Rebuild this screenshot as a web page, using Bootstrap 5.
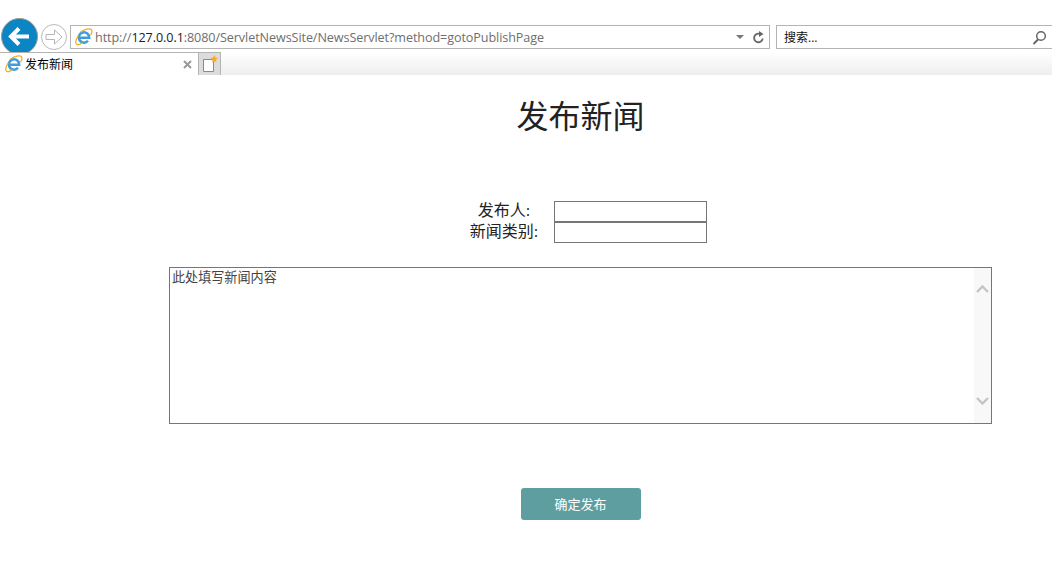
<!DOCTYPE html>
<html lang="zh-CN">
<head>
    <meta charset="UTF-8">
    <meta name="viewport" content="width=device-width, initial-scale=1.0">
    <title>发布新闻</title>
    <link href="https://cdn.jsdelivr.net/npm/bootstrap@5.3.0/dist/css/bootstrap.min.css" rel="stylesheet">
    <style>
        body {
            font-family: "Liberation Serif", "Noto Sans CJK SC", serif;
            color: #000;
            background: #fff;
            overflow: hidden;
        }

        .ie-toolbar {
            height: 52px;
            padding-top: 18px;
            overflow: hidden;
            font-family: "Open Sans", "Noto Sans CJK SC", sans-serif;
        }

        .ie-back {
            width: 37px;
            height: 37px;
            margin-left: 1px;
            flex: none;
        }

        .ie-forward {
            width: 26px;
            height: 26px;
            margin: 6px 3px 0 3px;
            flex: none;
        }

        .ie-address,
        .ie-search {
            height: 24px;
            margin-top: 7px;
            border: 1px solid #b4b4b4;
            background: #fff;
            flex: none;
        }

        .ie-address {
            width: 700px;
            padding: 0 4px;
            font-size: 12.6px;
            letter-spacing: -0.083px;
            color: #6e6e6e;
            white-space: nowrap;
        }

        .ie-address b {
            font-weight: 400;
            color: #222;
        }

        .ie-url {
            margin-left: 2px;
            padding-top: 2px;
        }

        .ie-search {
            width: 277px;
            margin-left: 6px;
            padding: 1px 5px 0 7px;
            font-size: 12px;
            color: #111;
        }

        .ie-tabs {
            height: 23px;
            background: linear-gradient(#fff, #eee);
            font-family: "Noto Sans CJK SC", sans-serif;
            font-size: 12px;
        }

        .ie-tab {
            width: 198px;
            background: #fff;
            border-top: 1px solid #b4b4b4;
            padding: 0 6px 0 5px;
        }

        .ie-tab-title {
            margin-left: 2px;
        }

        .ie-new-tab {
            width: 23px;
            background: #dcdcdc;
            border: 1px solid #b4b4b4;
            border-bottom: 0;
        }

        .news-page {
            padding-left: 109px;
        }

        .news-title {
            margin: 23px 0 0;
            height: 38px;
            line-height: 38px;
            font-family: "Liberation Serif", "Noto Sans CJK SC", serif;
            font-size: 32px;
            font-weight: 400;
            text-align: center;
            color: #222;
        }

        .news-fields {
            margin-top: 65px;
        }

        .news-field {
            height: 21px;
            font-size: 16px;
        }

        .news-label {
            width: 100px;
            text-align: center;
            line-height: 19px;
            color: #222;
        }

        .news-input {
            width: 153px;
            height: 21px;
            border: 1px solid #767676;
            border-radius: 0;
            outline: 0;
            padding: 1px 2px;
        }

        .news-editor {
            width: 823px;
            height: 157px;
            margin: 24px 0 0 60px;
            border: 1px solid #767676;
        }

        .news-text {
            border: 0;
            outline: 0;
            resize: none;
            overflow: hidden;
            padding: 1px 2px;
            font-family: "Noto Sans CJK SC", sans-serif;
            font-size: 13.1px;
            line-height: 16px;
            color: #444;
        }

        .news-scroll {
            width: 17px;
            background: #f8f8f8;
            padding: 17px 2px 18px;
        }

        .news-submit {
            display: block;
            width: 120px;
            height: 32px;
            margin: 64px auto 0;
            padding: 0;
            border: 0;
            border-radius: 3px;
            background: #5f9ea0;
            color: #fff;
            font-family: "Noto Sans CJK SC", sans-serif;
            font-size: 13px;
        }
    </style>
</head>
<body>
    <svg width="0" height="0" class="position-absolute">
        <symbol id="ie-logo" viewBox="0 0 18 18">
            <path d="M4.500 9.800H14.200A5.200 5.200 0 1 0 13 12.800" fill="none" stroke="#3f9bdc" stroke-width="2.500"/>
            <path d="M3.400 7.500C.8 11.500.2 15.200 1.700 16.300c1.300.9 3.700 0 5.800-1.700" fill="none" stroke="#efb02a" stroke-width="1.300"/>
            <path d="M5.500 4C9.800 1.200 14.800.1 16.300 1.500c1.200 1.100.6 3.300-.7 5.600" fill="none" stroke="#efb02a" stroke-width="1.300"/>
        </symbol>
    </svg>

    <!-- browser chrome -->
    <div class="ie-toolbar d-flex align-items-start">
        <svg class="ie-back" viewBox="0 0 37 37">
            <circle cx="18.500" cy="18.500" r="18" fill="#0c85c4" stroke="#9a9a9a" stroke-width="1"/>
            <path d="M28 18.500H11M18 10.500l-8 8 8 8" fill="none" stroke="#fff" stroke-width="4"/>
        </svg>
        <svg class="ie-forward" viewBox="0 0 26 26">
            <circle cx="13" cy="13" r="12.500" fill="#fff" stroke="#b9b9b9"/>
            <path d="M5 10.500h8.500V6L21 13l-7.500 7v-4.500H5z" fill="none" stroke="#b5b5b5"/>
        </svg>
        <div class="ie-address d-flex align-items-center">
            <svg width="18" height="18"><use href="#ie-logo"/></svg>
            <span class="ie-url flex-grow-1">http://<b>127.0.0.1</b>:8080/ServletNewsSite/NewsServlet?method=gotoPublishPage</span>
            <svg class="me-1" width="8" height="4" viewBox="0 0 8 4"><path d="M0 0h8L4 4z" fill="#777"/></svg>
            <svg class="ms-1" width="13" height="13" viewBox="0 0 13 13"><path d="M10.700 7.500a4.300 4.300 0 1 1-2-4.200" fill="none" stroke="#666" stroke-width="1.800"/><path d="M7 0v6l4.500-3z" fill="#666"/></svg>
        </div>
        <div class="ie-search d-flex align-items-center justify-content-between">
            <span>搜索...</span>
            <svg width="15" height="15" viewBox="0 0 15 15"><circle cx="9" cy="6" r="4.300" fill="none" stroke="#666" stroke-width="1.500"/><path d="M6 9.500l-4.500 4.500" stroke="#666" stroke-width="2"/></svg>
        </div>
    </div>
    <div class="ie-tabs d-flex">
        <div class="ie-tab d-flex align-items-center">
            <svg width="18" height="18"><use href="#ie-logo"/></svg>
            <span class="flex-grow-1 ie-tab-title">发布新闻</span>
            <svg width="9" height="9" viewBox="0 0 9 9"><path d="M1 1l7 7M8 1L1 8" stroke="#999" stroke-width="2"/></svg>
        </div>
        <div class="ie-new-tab d-flex align-items-center justify-content-center">
            <svg width="18" height="18" viewBox="0 0 18 18"><path d="M2.500 4.500h10v12h-10z" fill="#fff" stroke="#8a8a8a"/><path d="M13.500 0l1 2.500 2.500.5-2 1.800.5 2.700-2-1.300-2.500 1.300.5-2.700-2-1.800 2.500-.5z" fill="#f7ac2e"/></svg>
        </div>
    </div>

    <!-- page -->
    <main class="news-page">
        <h1 class="news-title">发布新闻</h1>
        <form>
            <div class="news-fields">
                <div class="news-field d-flex justify-content-center">
                    <label class="news-label" for="author">发布人:</label>
                    <input class="news-input" id="author" type="text">
                </div>
                <div class="news-field d-flex justify-content-center">
                    <label class="news-label" for="category">新闻类别:</label>
                    <input class="news-input" id="category" type="text">
                </div>
            </div>
            <div class="news-editor d-flex">
                <textarea class="news-text flex-grow-1">此处填写新闻内容</textarea>
                <div class="news-scroll d-flex flex-column justify-content-between">
                    <svg width="13" height="8" viewBox="0 0 13 8"><path d="M1 7l5.500-5.500L12 7" fill="none" stroke="#c4c4c4" stroke-width="2.400"/></svg>
                    <svg width="13" height="8" viewBox="0 0 13 8"><path d="M1 1l5.500 5.500L12 1" fill="none" stroke="#c4c4c4" stroke-width="2.400"/></svg>
                </div>
            </div>
            <button class="news-submit" type="button">确定发布</button>
        </form>
    </main>

    <script src="https://cdn.jsdelivr.net/npm/bootstrap@5.3.0/dist/js/bootstrap.bundle.min.js"></script>
</body>
</html>
